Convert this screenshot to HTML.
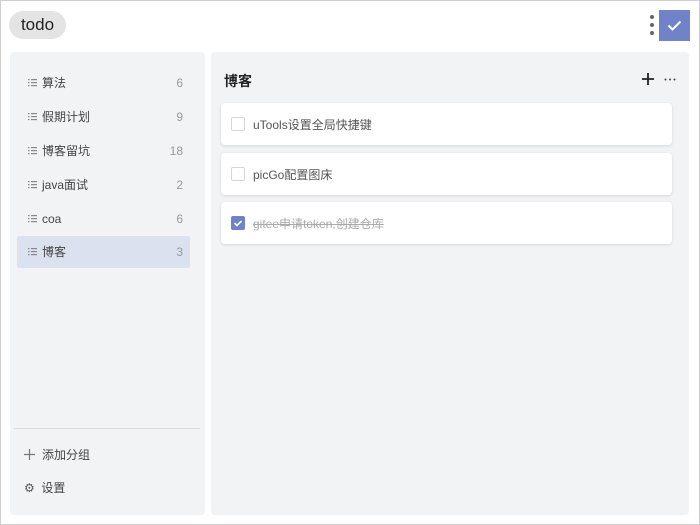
<!DOCTYPE html>
<html><head><meta charset="utf-8"><style>
*{box-sizing:border-box;margin:0;padding:0}
body{width:700px;height:525px;background:#fff;font-family:"Liberation Sans","Noto Sans CJK SC",sans-serif;position:relative;overflow:hidden}
.frame{position:absolute;left:0;top:0;width:700px;height:525px;border:1px solid #cfcfcf}
.logo{position:absolute;left:9px;top:11px;width:57px;height:28px;border-radius:14px;background:#e4e4e4;font-size:17px;color:#222;line-height:28px;text-align:center}
.dots{position:absolute;left:650px;top:15px;width:4px}
.dots i{display:block;width:4px;height:4px;border-radius:2px;background:#666;margin-bottom:4px}
.chk{position:absolute;left:659px;top:10px;width:31px;height:31px;background:#7183c8}
.side{position:absolute;left:10px;top:52px;width:195px;height:463px;background:#f2f3f5;border-radius:4px}
.item{position:absolute;left:7px;width:173px;height:32px;font-size:12px;color:#444;line-height:32px;border-radius:2px}
.item .ic{position:absolute;left:11px;top:12px}
.item .t{position:absolute;left:25px}
.item .n{position:absolute;right:7px;color:#999}
.item.act{background:#dce1ef}
.div{position:absolute;left:4px;top:376px;width:186px;height:1px;background:#dadada}
.bot{position:absolute;left:14px;font-size:12px;color:#444}
.main{position:absolute;left:211px;top:52px;width:478px;height:463px;background:#f2f3f5;border-radius:4px}
.h{position:absolute;left:13px;top:19px;font-size:14px;font-weight:bold;color:#222}
.card{position:absolute;left:10px;width:451px;height:42px;background:#fff;border-radius:4px;box-shadow:0 1px 3px rgba(0,0,0,.12)}
.cb{position:absolute;left:10px;top:14px;width:14px;height:14px;border:1px solid #d6d6d6;border-radius:2px;background:#fff}
.cb.on{background:#7183c8;border-color:#7183c8}
.ct{position:absolute;left:32px;top:13px;font-size:12px;color:#555}
.ct.done{color:#aaa;text-decoration:line-through}
</style></head><body>
<div class="frame"></div>
<div class="logo">todo</div>
<div class="dots"><i></i><i></i><i></i></div>
<div class="chk"><svg width="31" height="31"><path d="M9.5 15.5l4 4 8-8" stroke="#fff" stroke-width="2" fill="none"/></svg></div>
<svg width="0" height="0" style="position:absolute"><defs><g id="li"><rect x="0" y="0" width="1.5" height="1.2" fill="#888"/><rect x="0" y="3" width="1.5" height="1.2" fill="#888"/><rect x="0" y="6" width="1.5" height="1.2" fill="#888"/><rect x="3" y="0" width="6" height="1.2" fill="#888"/><rect x="3" y="3" width="6" height="1.2" fill="#888"/><rect x="3" y="6" width="6" height="1.2" fill="#888"/></g></defs></svg>
<div class="side">
<div class="item" style="top:15px"><svg class="ic" width="9" height="8"><use href="#li"/></svg><span class="t">算法</span><span class="n">6</span></div>
<div class="item" style="top:49px"><svg class="ic" width="9" height="8"><use href="#li"/></svg><span class="t">假期计划</span><span class="n">9</span></div>
<div class="item" style="top:83px"><svg class="ic" width="9" height="8"><use href="#li"/></svg><span class="t">博客留坑</span><span class="n">18</span></div>
<div class="item" style="top:117px"><svg class="ic" width="9" height="8"><use href="#li"/></svg><span class="t">java面试</span><span class="n">2</span></div>
<div class="item" style="top:151px"><svg class="ic" width="9" height="8"><use href="#li"/></svg><span class="t">coa</span><span class="n">6</span></div>
<div class="item act" style="top:184px"><svg class="ic" width="9" height="8"><use href="#li"/></svg><span class="t">博客</span><span class="n">3</span></div>
<div class="div"></div>
<svg style="position:absolute;left:14px;top:397px" width="11" height="11"><path d="M5.5 0v11M0 5.5h11" stroke="#777" stroke-width="1.2"/></svg>
<div class="bot" style="left:32px;top:394px">添加分组</div>
<div class="bot" style="top:427px"><span style="color:#555">⚙</span>&nbsp; 设置</div>
</div>
<div class="main">
<div class="h">博客</div>
<svg style="position:absolute;left:431px;top:21px" width="12" height="12"><path d="M6 0v12M0 6h12" stroke="#222" stroke-width="1.8"/></svg>
<svg style="position:absolute;left:453px;top:26px" width="12" height="3"><circle cx="1.5" cy="1.5" r="1" fill="#444"/><circle cx="6" cy="1.5" r="1" fill="#444"/><circle cx="10.5" cy="1.5" r="1" fill="#444"/></svg>
<div class="card" style="top:51px"><div class="cb"></div><div class="ct">uTools设置全局快捷键</div></div>
<div class="card" style="top:101px"><div class="cb"></div><div class="ct">picGo配置图床</div></div>
<div class="card" style="top:150px"><div class="cb on"><svg width="14" height="14" style="position:absolute;left:-1px;top:-1px"><path d="M3.5 7l2.5 2.5 4.5-4.5" stroke="#fff" stroke-width="1.6" fill="none"/></svg></div><div class="ct done">gitee申请token,创建仓库</div></div>
</div>
</body></html>
